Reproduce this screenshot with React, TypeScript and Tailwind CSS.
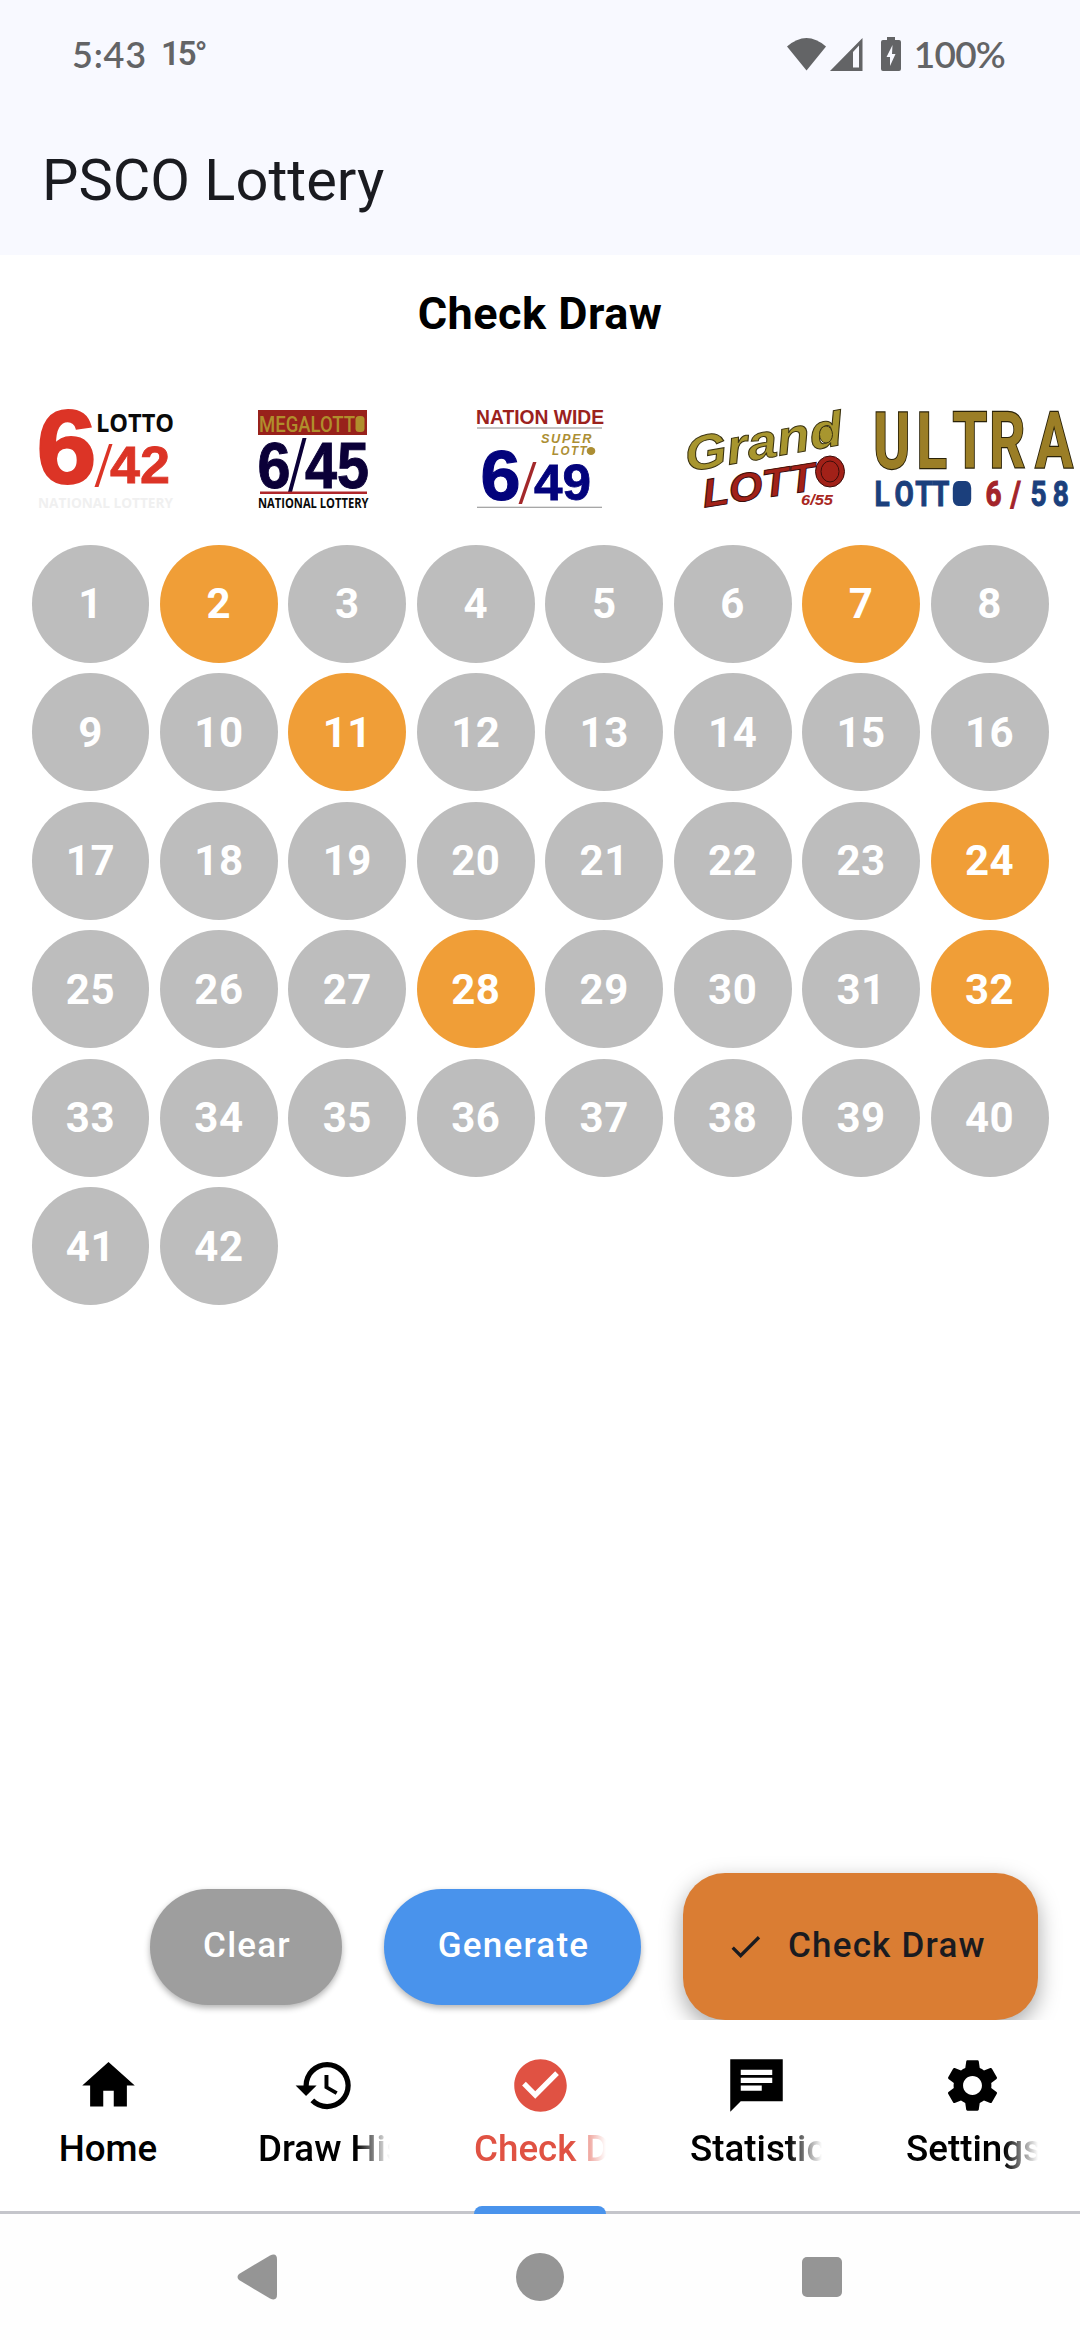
import { MdCheck, MdCheckCircle, MdHistory, MdSettings } from "react-icons/md";
import type { ReactNode } from "react";

type Tab = {
  label: string;
  icon: ReactNode;
  active?: boolean;
};

const BALL_COUNT = 42;
const PICKED = [2, 7, 11, 24, 28, 32];

const TABS: Tab[] = [
  { label: "Home", icon: <HomeIcon /> },
  { label: "Draw History", icon: <MdHistory className="size-[63px]" /> },
  {
    label: "Check Draw",
    icon: <MdCheckCircle className="size-[63px]" />,
    active: true,
  },
  { label: "Statistics", icon: <ChatIcon /> },
  { label: "Settings", icon: <MdSettings className="size-[63px]" /> },
];

function HomeIcon() {
  return (
    <svg viewBox="0 0 24 24" className="size-[63px]" fill="currentColor">
      <path d="M10 20v-6h4v6h5v-8h3L12 3 2 12h3v8z" />
    </svg>
  );
}

function ChatIcon() {
  return (
    <svg viewBox="0 0 24 24" className="size-[63px]" fill="currentColor">
      <path d="M22 2H2v20l4-4h16V2zM6 9h12v2H6V9zm8 5H6v-2h8v2zm4-6H6V6h12v2z" />
    </svg>
  );
}

function StatusBar() {
  return (
    <div className="flex h-[108px] items-center pr-[75px] pl-[72px] text-[#636466]">
      <span className="font-['Lato','Open_Sans',sans-serif] text-[36px] leading-[44px] font-semibold tracking-[0.8px]">
        5:43
      </span>
      <span className="ml-[14px] text-[33px] leading-[44px] font-semibold tracking-[-2px]">
        15°
      </span>
      <svg
        viewBox="0 0 116 36"
        className="ml-auto h-9 w-[116px]"
        fill="currentColor"
      >
        <path d="M0 10.500Q19.500-6.500 39 10.500L19.500 34.500z" />
        <path
          fillRule="evenodd"
          d="M43 35 75.500 2v33zM66 16v15.500h6V9.500z"
        />
        <path
          fillRule="evenodd"
          d="M100 1h8v3h4q2 0 2 2v27q0 2-2 2H96q-2 0-2-2V6q0-2 2-2h4zM105.500 9 99.500 21h3.500v9l5.500-12H105z"
        />
      </svg>
      <span className="ml-[11px] font-['Lato','Open_Sans',sans-serif] text-[37px] leading-[44px] font-semibold tracking-[-0.8px]">
        100%
      </span>
    </div>
  );
}

function Lotto642() {
  return (
    <svg
      viewBox="0 400 216 120"
      className="h-[120px] w-[216px] overflow-visible"
      fontFamily="Liberation Sans, sans-serif"
      fontWeight="700"
      fill="#dc3426"
    >
      <text x="36.500" y="483" fontSize="104" stroke="#dc3426" strokeWidth="2" textLength="60" lengthAdjust="spacingAndGlyphs">
        6
      </text>
      <text x="96" y="431.500" fontSize="25" fill="#0a0a0a" fontFamily="Open Sans, sans-serif" textLength="78" lengthAdjust="spacingAndGlyphs">
        LOTTO
      </text>
      <path d="M94.500 487 109 444h3.500L98.500 487z" />
      <text x="110" y="483" fontSize="51.500" stroke="#dc3426" strokeWidth="0.800" textLength="60" lengthAdjust="spacingAndGlyphs">
        42
      </text>
      <text x="38" y="508" fontSize="15" fill="#f0f0f0" fontFamily="Open Sans, sans-serif" textLength="135" lengthAdjust="spacingAndGlyphs">
        NATIONAL LOTTERY
      </text>
    </svg>
  );
}

function MegaLotto645() {
  return (
    <svg
      viewBox="216 400 216 120"
      className="h-[120px] w-[216px] overflow-visible"
      fontFamily="Liberation Sans, sans-serif"
      fontWeight="700"
      fill="#0b0038"
    >
      <path fill="#98211b" d="M258 410h109v25H258z" />
      <text x="259" y="431.500" fontSize="22" fill="#b08e2c" fontFamily="Roboto, sans-serif" fontWeight="500" textLength="96" lengthAdjust="spacingAndGlyphs">
        MEGALOTT
      </text>
      <rect x="355.500" y="416" width="9" height="16" rx="3.500" fill="#b08e2c" />
      <text x="257.500" y="487.500" fontSize="65" stroke="#0b0038" strokeWidth="1" textLength="33" lengthAdjust="spacingAndGlyphs">
        6
      </text>
      <path d="M288 492 302.500 438h4L292 492z" />
      <text x="305" y="487.500" fontSize="65" stroke="#0b0038" strokeWidth="1" textLength="64" lengthAdjust="spacingAndGlyphs">
        45
      </text>
      <path fill="#b0272b" d="M260 491.500h107v2.500H260z" />
      <text x="258" y="508" fontSize="14.500" fill="#0a0a0a" fontFamily="Open Sans, sans-serif" textLength="110.500" lengthAdjust="spacingAndGlyphs">
        NATIONAL LOTTERY
      </text>
    </svg>
  );
}

function SuperLotto649() {
  return (
    <svg
      viewBox="432 400 216 120"
      className="h-[120px] w-[216px] overflow-visible"
      fontFamily="Liberation Sans, sans-serif"
      fontWeight="700"
      fill="#03037c"
    >
      <text x="476" y="424" fontSize="19.500" fill="#9b221d" textLength="128" lengthAdjust="spacingAndGlyphs">
        NATION WIDE
      </text>
      <path fill="#8a8a8a" d="M477 427.500h125v1H477zM477 506.700h125v1H477z" />
      <g fill="#ac8e33" fontSize="12" fontStyle="italic" letterSpacing="1.500">
        <text x="541" y="442.500" textLength="52" lengthAdjust="spacingAndGlyphs">
          SUPER
        </text>
        <text x="552" y="455" textLength="36" lengthAdjust="spacingAndGlyphs">
          LOTT
        </text>
        <ellipse cx="591" cy="451" rx="4.300" ry="4" />
      </g>
      <text x="480.500" y="499.500" fontSize="71" stroke="#03037c" strokeWidth="1.200" textLength="40" lengthAdjust="spacingAndGlyphs">
        6
      </text>
      <path fill="#a3282a" d="M518.500 504 533 462h3.500L522 504z" />
      <text x="534" y="499.500" fontSize="50" stroke="#03037c" strokeWidth="0.800" textLength="57" lengthAdjust="spacingAndGlyphs">
        49
      </text>
    </svg>
  );
}

function GrandLotto655() {
  return (
    <svg
      viewBox="648 400 216 120"
      className="h-[120px] w-[216px] overflow-visible"
      fontFamily="Liberation Sans, sans-serif"
      fontWeight="700"
      fontStyle="italic"
    >
      <g strokeWidth="1" stroke="#3a3210" fill="#a8962f">
        <text transform="translate(687 472) skewY(-10) skewX(7)" fontSize="49" textLength="157" lengthAdjust="spacingAndGlyphs">
          Grand
        </text>
        <ellipse cx="826" cy="434.500" rx="6.500" ry="8.500" />
      </g>
      <g strokeWidth="1" stroke="#3c0d0a" fill="#a22118">
        <text transform="translate(704 507.500) skewY(-9) skewX(6)" fontSize="40" textLength="112" lengthAdjust="spacingAndGlyphs">
          LOTT
        </text>
        <ellipse cx="830" cy="471.500" rx="14.500" ry="15.500" />
        <ellipse cx="830" cy="471.500" rx="9" ry="10.500" />
      </g>
      <text x="801" y="504.500" fontSize="15.500" fill="#a8281f" textLength="32" lengthAdjust="spacingAndGlyphs">
        6/55
      </text>
    </svg>
  );
}

function UltraLotto658() {
  return (
    <svg
      viewBox="864 400 216 120"
      className="h-[120px] w-[216px] overflow-visible"
      fontFamily="Roboto, sans-serif"
      fontWeight="700"
      fill="#1b3f7c"
    >
      <text
        transform="translate(864 467.500) scale(.72 1)"
        x="13 73 123 174 238"
        y="0"
        fontSize="78"
        fill="#9b7e26"
        stroke="#2a2208"
        strokeWidth="2.400"
        paintOrder="stroke"
      >
        ULTRA
      </text>
      <g transform="translate(864 506) scale(.8 1)" fontSize="35">
        <text x="13 38 64 85" y="0" stroke="#1b3f7c">
          LOTT
        </text>
        <rect x="111" y="-25" width="23" height="25" rx="7" />
        <text x="152 183" y="0" fill="#a3242a" stroke="#a3242a">
          6/
        </text>
        <text x="208 236" y="0" stroke="#1b3f7c">
          58
        </text>
      </g>
    </svg>
  );
}

function Ball({ value }: { value: number }) {
  const picked = PICKED.includes(value);
  return (
    <button
      className={`flex aspect-square items-center justify-center rounded-full pt-px text-[42px] leading-none font-bold tracking-[0.5px] text-white ${
        picked ? "bg-[#f09e37]" : "bg-[#bdbdbd]"
      }`}
    >
      {value}
    </button>
  );
}

function BottomTab({ label, icon, active }: Tab) {
  return (
    <div
      className={`relative flex w-[216px] flex-col items-center px-[42px] pt-[34px] ${
        active ? "text-[#e05243]" : "text-black"
      }`}
    >
      {icon}
      <div
        className={`flex h-[46px] w-full overflow-hidden text-[36.750px] leading-[46px] font-medium whitespace-nowrap ${
          label === "Home"
            ? "mt-[9px] justify-center"
            : "mt-[9px] mask-r-from-[98px] mask-r-to-[132px]"
        }`}
      >
        {label}
      </div>
      {active && (
        <div className="absolute bottom-[-3px] left-[42px] h-2 w-[132px] rounded-t-[8px] bg-[#4993ec]" />
      )}
    </div>
  );
}

export default function App() {
  const balls = Array.from({ length: BALL_COUNT }, (_, i) => i + 1);

  return (
    <div className="flex h-[2340px] w-[1080px] flex-col overflow-hidden bg-white font-['Roboto',sans-serif]">
      <header className="h-[255px] bg-[#f8f9ff]">
        <StatusBar />
        <h1 className="mt-[38px] ml-[42px] text-[57.750px] leading-[68px] text-[#1a1b20]">
          PSCO Lottery
        </h1>
      </header>

      <main className="flex h-[1765px] flex-col overflow-hidden">
        <h2 className="mt-[33px] text-center text-[45px] leading-[52px] font-bold tracking-[0.5px] text-black">
          Check Draw
        </h2>
        <div className="mt-[60px] flex">
          <Lotto642 />
          <MegaLotto645 />
          <SuperLotto649 />
          <GrandLotto655 />
          <UltraLotto658 />
        </div>
        <div className="mt-[25px] grid grid-cols-8 gap-[10.500px] px-[31.500px]">
          {balls.map((n) => (
            <Ball key={n} value={n} />
          ))}
        </div>

        <div className="mt-auto flex items-center justify-end gap-[42px] pr-[42px] text-[35px] font-medium tracking-[1.200px]">
          <button className="h-[116px] w-[192px] rounded-full bg-[#9e9e9e] pl-[2px] text-white shadow-[0_3px_6px_rgba(0,0,0,0.3)]">
            Clear
          </button>
          <button className="h-[116px] w-[257px] rounded-full bg-[#4993ec] pl-[2px] text-white shadow-[0_3px_6px_rgba(0,0,0,0.3)]">
            Generate
          </button>
          <button className="flex h-[147px] w-[355px] items-center rounded-[42px] bg-[#da7d33] pl-[43px] text-[#1a1b20] shadow-[0_8px_22px_rgba(0,0,0,0.35)]">
            <MdCheck className="size-[39px]" />
            <span className="ml-[23px]">Check Draw</span>
          </button>
        </div>
      </main>

      <nav className="flex h-[194px] border-b-[3px] border-[#c4c5cb]">
        {TABS.map((tab) => (
          <BottomTab key={tab.label} {...tab} />
        ))}
      </nav>

      <footer className="flex h-[126px] items-center bg-[#fefefe] pl-[237px] text-[#959595]">
        <svg viewBox="0 0 40 46" className="h-[46px] w-10" fill="currentColor">
          <path d="M2 20 33 1.500q7-3 7 4v35q0 7-7 4L2 26q-3-3 0-6z" />
        </svg>
        <div className="ml-[239px] size-12 rounded-full bg-[#959595]" />
        <div className="ml-[238px] size-10 rounded-[5px] bg-[#959595]" />
      </footer>
    </div>
  );
}
